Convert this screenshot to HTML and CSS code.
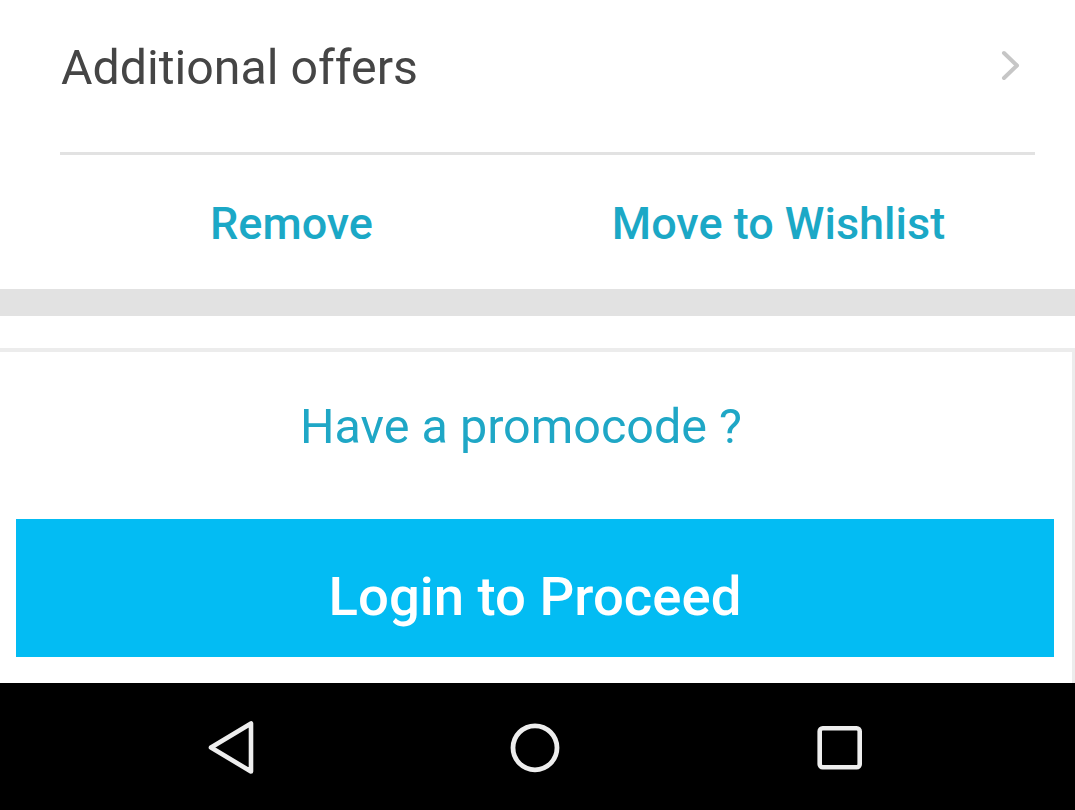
FILE: index.html
```html
<!DOCTYPE html>
<html lang="en">
<head>
<meta charset="utf-8">
<title>Cart</title>
<link rel="stylesheet" href="styles.css">
</head>
<body>
<div class="screen">
  <section class="item">
    <div class="offers">
      <span class="offers-label">Additional offers</span>
      <svg class="chevron" width="20" height="32" viewBox="0 0 20 32"><polyline points="3,3 16,15.5 3,28" fill="none" stroke="#c6c6c6" stroke-width="4" stroke-linecap="round" stroke-linejoin="round"/></svg>
    </div>
    <div class="divider"></div>
    <div class="actions">
      <span class="action">Remove</span>
      <span class="action">Move to Wishlist</span>
    </div>
  </section>
  <div class="band"></div>
  <div class="spacer"></div>
  <section class="card">
    <div class="promo">Have a promocode ?</div>
    <div class="login">Login to Proceed</div>
  </section>
  <nav class="navbar">
    <svg class="nav-icon" width="60" height="60" viewBox="0 0 60 60"><polygon points="10,30.5 50,6.5 50,54.5" fill="none" stroke="#eeeeee" stroke-width="4.6" stroke-linejoin="round"/></svg>
    <svg class="nav-icon" width="60" height="60" viewBox="0 0 60 60"><circle cx="30" cy="30.8" r="22" fill="none" stroke="#eeeeee" stroke-width="4.8"/></svg>
    <svg class="nav-icon" width="60" height="60" viewBox="0 0 60 60"><rect x="10.7" y="11.2" width="40" height="39" rx="3" fill="none" stroke="#eeeeee" stroke-width="4.6"/></svg>
  </nav>
</div>
</body>
</html>
```

FILE: styles.css
```css
html, body {
  margin: 0;
  padding: 0;
  background: #ffffff;
}

.screen {
  width: 1075px;
  height: 810px;
  overflow: hidden;
  display: flex;
  flex-direction: column;
  font-family: Roboto, "Noto Sans", Arial, sans-serif;
}

.item {
  background: #ffffff;
}

.offers {
  height: 132px;
  margin: 0 40px 0 61px;
  display: flex;
  align-items: center;
  justify-content: space-between;
}

.offers-label {
  font-size: 48.3px;
  line-height: 49px;
  color: #454545;
  padding-top: 2px;
}

.chevron {
  margin-right: 14px;
}

.divider {
  margin: 20px 40px 0 60px;
  height: 3px;
  background: #e2e2e2;
}

.actions {
  height: 134px;
  padding: 0 53px 0 48px;
  display: flex;
  align-items: center;
}

.action {
  flex: 1;
  text-align: center;
  font-size: 45px;
  line-height: 45px;
  font-weight: 500;
  color: #1ba8c6;
  padding-top: 2px;
}

.band {
  height: 27px;
  background: #e2e2e2;
}

.spacer {
  height: 32px;
  background: #ffffff;
}

.card {
  border-top: 4px solid #ececec;
  border-right: 3px solid #ececec;
  background: #ffffff;
  padding-bottom: 26px;
}

.promo {
  height: 150px;
  display: flex;
  align-items: center;
  justify-content: center;
  padding-right: 30px;
  font-size: 48.5px;
  line-height: 48px;
  color: #1fa7c6;
}

.login {
  margin: 17px 18px 0 16px;
  height: 138px;
  box-sizing: border-box;
  padding-top: 16px;
  background: #03bcf3;
  color: #ffffff;
  display: flex;
  align-items: center;
  justify-content: center;
  font-size: 54.5px;
  line-height: 55px;
  font-weight: 500;
}

.navbar {
  flex: 1;
  background: #000000;
  display: flex;
  align-items: center;
  justify-content: center;
  gap: 244px;
  padding-right: 5px;
}

.nav-icon {
  display: block;
}
```
